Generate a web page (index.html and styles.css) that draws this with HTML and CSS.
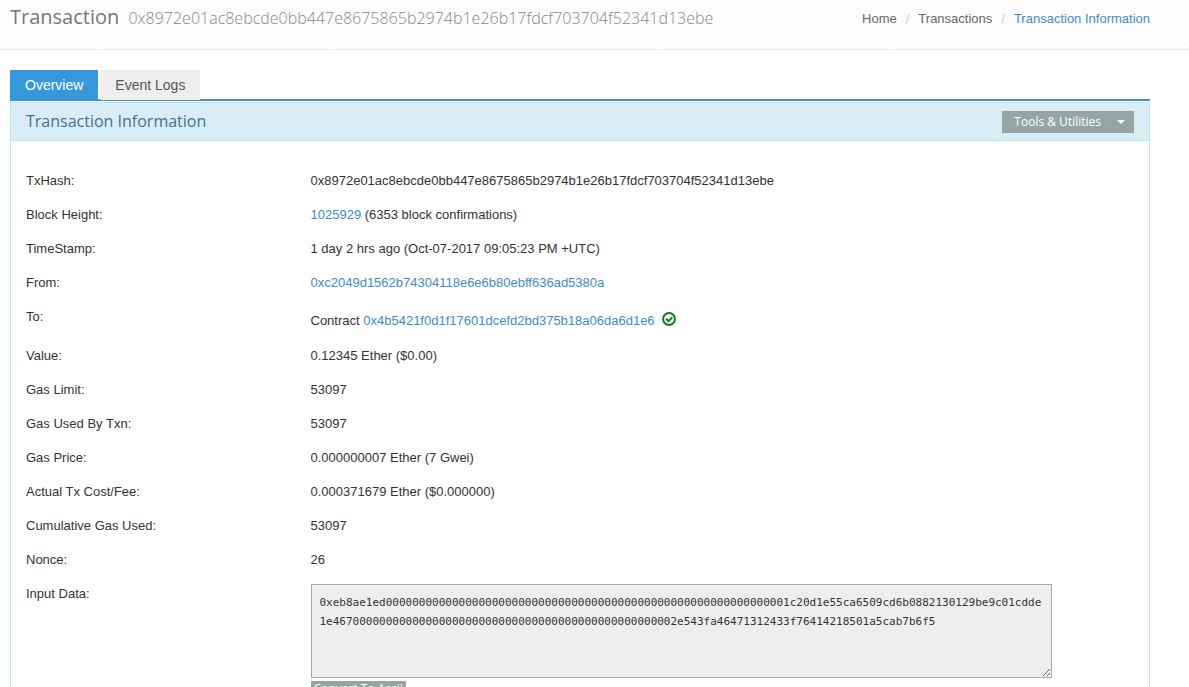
FILE: index.html
```html
<!DOCTYPE html>
<html lang="en">
<head>
<meta charset="utf-8">
<title>Transaction Information</title>
<link rel="stylesheet" href="styles.css">
</head>
<body>
<header class="page-head">
  <div class="container head-row">
    <h1 class="title">Transaction <span class="title-hash">0x8972e01ac8ebcde0bb447e8675865b2974b1e26b17fdcf703704f52341d13ebe</span></h1>
    <nav aria-label="Breadcrumb">
      <ol class="breadcrumb">
        <li><a href="#">Home</a></li>
        <li><a href="#">Transactions</a></li>
        <li class="current">Transaction Information</li>
      </ol>
    </nav>
  </div>
</header>
<main class="container content">
  <nav class="tabs" aria-label="Sections">
    <a class="tab active" href="#overview">Overview</a>
    <a class="tab" href="#logs">Event Logs</a>
  </nav>
  <section class="panel" id="overview">
    <div class="panel-head">
      <h2 class="panel-title">Transaction Information</h2>
      <button class="btn tools" type="button">Tools &amp; Utilities
        <svg class="caret" viewBox="0 0 8 4" aria-hidden="true"><path d="M0 0h8L4 4z"/></svg>
      </button>
    </div>
    <dl class="details">
      <div class="row"><dt>TxHash:</dt><dd>0x8972e01ac8ebcde0bb447e8675865b2974b1e26b17fdcf703704f52341d13ebe</dd></div>
      <div class="row"><dt>Block Height:</dt><dd><a href="#">1025929</a> (6353 block confirmations)</dd></div>
      <div class="row"><dt>TimeStamp:</dt><dd>1 day 2 hrs ago (Oct-07-2017 09:05:23 PM +UTC)</dd></div>
      <div class="row"><dt>From:</dt><dd><a href="#">0xc2049d1562b74304118e6e6b80ebff636ad5380a</a></dd></div>
      <div class="row"><dt>To:</dt><dd class="to">Contract <a href="#">0x4b5421f0d1f17601dcefd2bd375b18a06da6d1e6</a>
        <svg class="check" viewBox="0 0 14 14" role="img" aria-label="Success"><circle cx="7" cy="7" r="5.9"/><path d="M4 6.8l2.4 2.4 4-4"/></svg></dd></div>
      <div class="row"><dt>Value:</dt><dd>0.12345 Ether ($0.00)</dd></div>
      <div class="row"><dt>Gas Limit:</dt><dd>53097</dd></div>
      <div class="row"><dt>Gas Used By Txn:</dt><dd>53097</dd></div>
      <div class="row"><dt>Gas Price:</dt><dd>0.000000007 Ether (7 Gwei)</dd></div>
      <div class="row"><dt>Actual Tx Cost/Fee:</dt><dd>0.000371679 Ether ($0.000000)</dd></div>
      <div class="row"><dt>Cumulative Gas Used:</dt><dd>53097</dd></div>
      <div class="row"><dt>Nonce:</dt><dd>26</dd></div>
      <div class="row"><dt><label for="input-data">Input Data:</label></dt><dd class="input-cell">
        <textarea class="input-data" id="input-data" readonly spellcheck="false">0xeb8ae1ed0000000000000000000000000000000000000000000000000000000000001c20d1e55ca6509cd6b0882130129be9c01cdde1e4670000000000000000000000000000000000000000000000002e543fa46471312433f76414218501a5cab7b6f5</textarea>
        <button class="btn convert" type="button">Convert To Ascii</button></dd></div>
    </dl>
  </section>
</main>
</body>
</html>
```

FILE: styles.css
```css
* { box-sizing: border-box; }
html { scrollbar-width: none; }
body {
  margin: 0;
  background: #fff;
  color: #333;
  font: 13px/18px "Liberation Sans", Arial, sans-serif;
}
a { color: #428bca; text-decoration: none; }
.container { max-width: 1160px; padding: 0 10px; }

.page-head {
  height: 50px;
  border-bottom: 1px solid #eee;
  background: repeating-linear-gradient(135deg, #fbfbfb 0 2px, #fefefe 2px 4px);
}
.head-row { display: flex; justify-content: space-between; align-items: flex-start; padding-top: 4px; }
.title {
  margin: 0;
  color: #777;
  font: 400 20px/26px "Open Sans", sans-serif;
}
.title-hash { margin-left: 4px; color: #888; font-size: 16px; font-weight: 300; }
.breadcrumb { display: flex; margin: 0; padding: 6px 0 0; list-style: none; color: #428bca; }
.breadcrumb a { color: #666; }
.breadcrumb li + li::before { content: "/"; padding: 0 9px; color: #ccc; }

.content { padding-top: 20px; }
.tabs { display: flex; gap: 2px; border-bottom: 2px solid #4a90b8; }
.tab {
  margin-bottom: -1px;
  padding: 7px 15px 6px;
  background: #eee;
  color: #555;
  font-size: 14px;
  line-height: 17px;
}
.tab.active { background: #3498db; color: #fff; }

.panel { border: 1px solid #bce8f1; margin-top: 1px; }
.panel-head {
  display: flex;
  justify-content: space-between;
  align-items: center;
  height: 38px;
  padding: 0 15px;
  background: #d9edf7;
  border-bottom: 1px solid #bce8f1;
}
.panel-title { margin: 0; padding-bottom: 2px; color: #3f7390; font: 400 16px/20px "Open Sans", sans-serif; }
.btn {
  border: 0;
  background: #95a5a6;
  color: #fff;
  font: 400 12px/18px "Open Sans", sans-serif;
}
.tools { display: flex; align-items: center; gap: 16px; height: 22px; padding: 0 9px 0 12px; }
.caret { width: 8px; height: 4px; fill: #fff; }

.details { margin: 0; padding: 23px 0; }
.row { display: grid; grid-template-columns: 1fr 3fr; padding: 8px 0; }
dt, dd { margin: 0; padding: 0 15px; }
.to { padding-top: 3px; line-height: 20px; }
.check {
  width: 14px;
  height: 14px;
  margin-left: 4px;
  vertical-align: -1px;
  fill: none;
  stroke: #0a7d1c;
  stroke-width: 2;
}
.input-data {
  display: block;
  width: 90%;
  height: 94px;
  margin-top: -1px;
  padding: 8px;
  border: 1px solid #a9a9a9;
  border-radius: 0;
  background: #eee;
  color: #333;
  font: 11px/19px "DejaVu Sans Mono", monospace;
}
.convert { display: block; margin-top: 3px; padding: 0 3px 3px; line-height: 15px; }
```
